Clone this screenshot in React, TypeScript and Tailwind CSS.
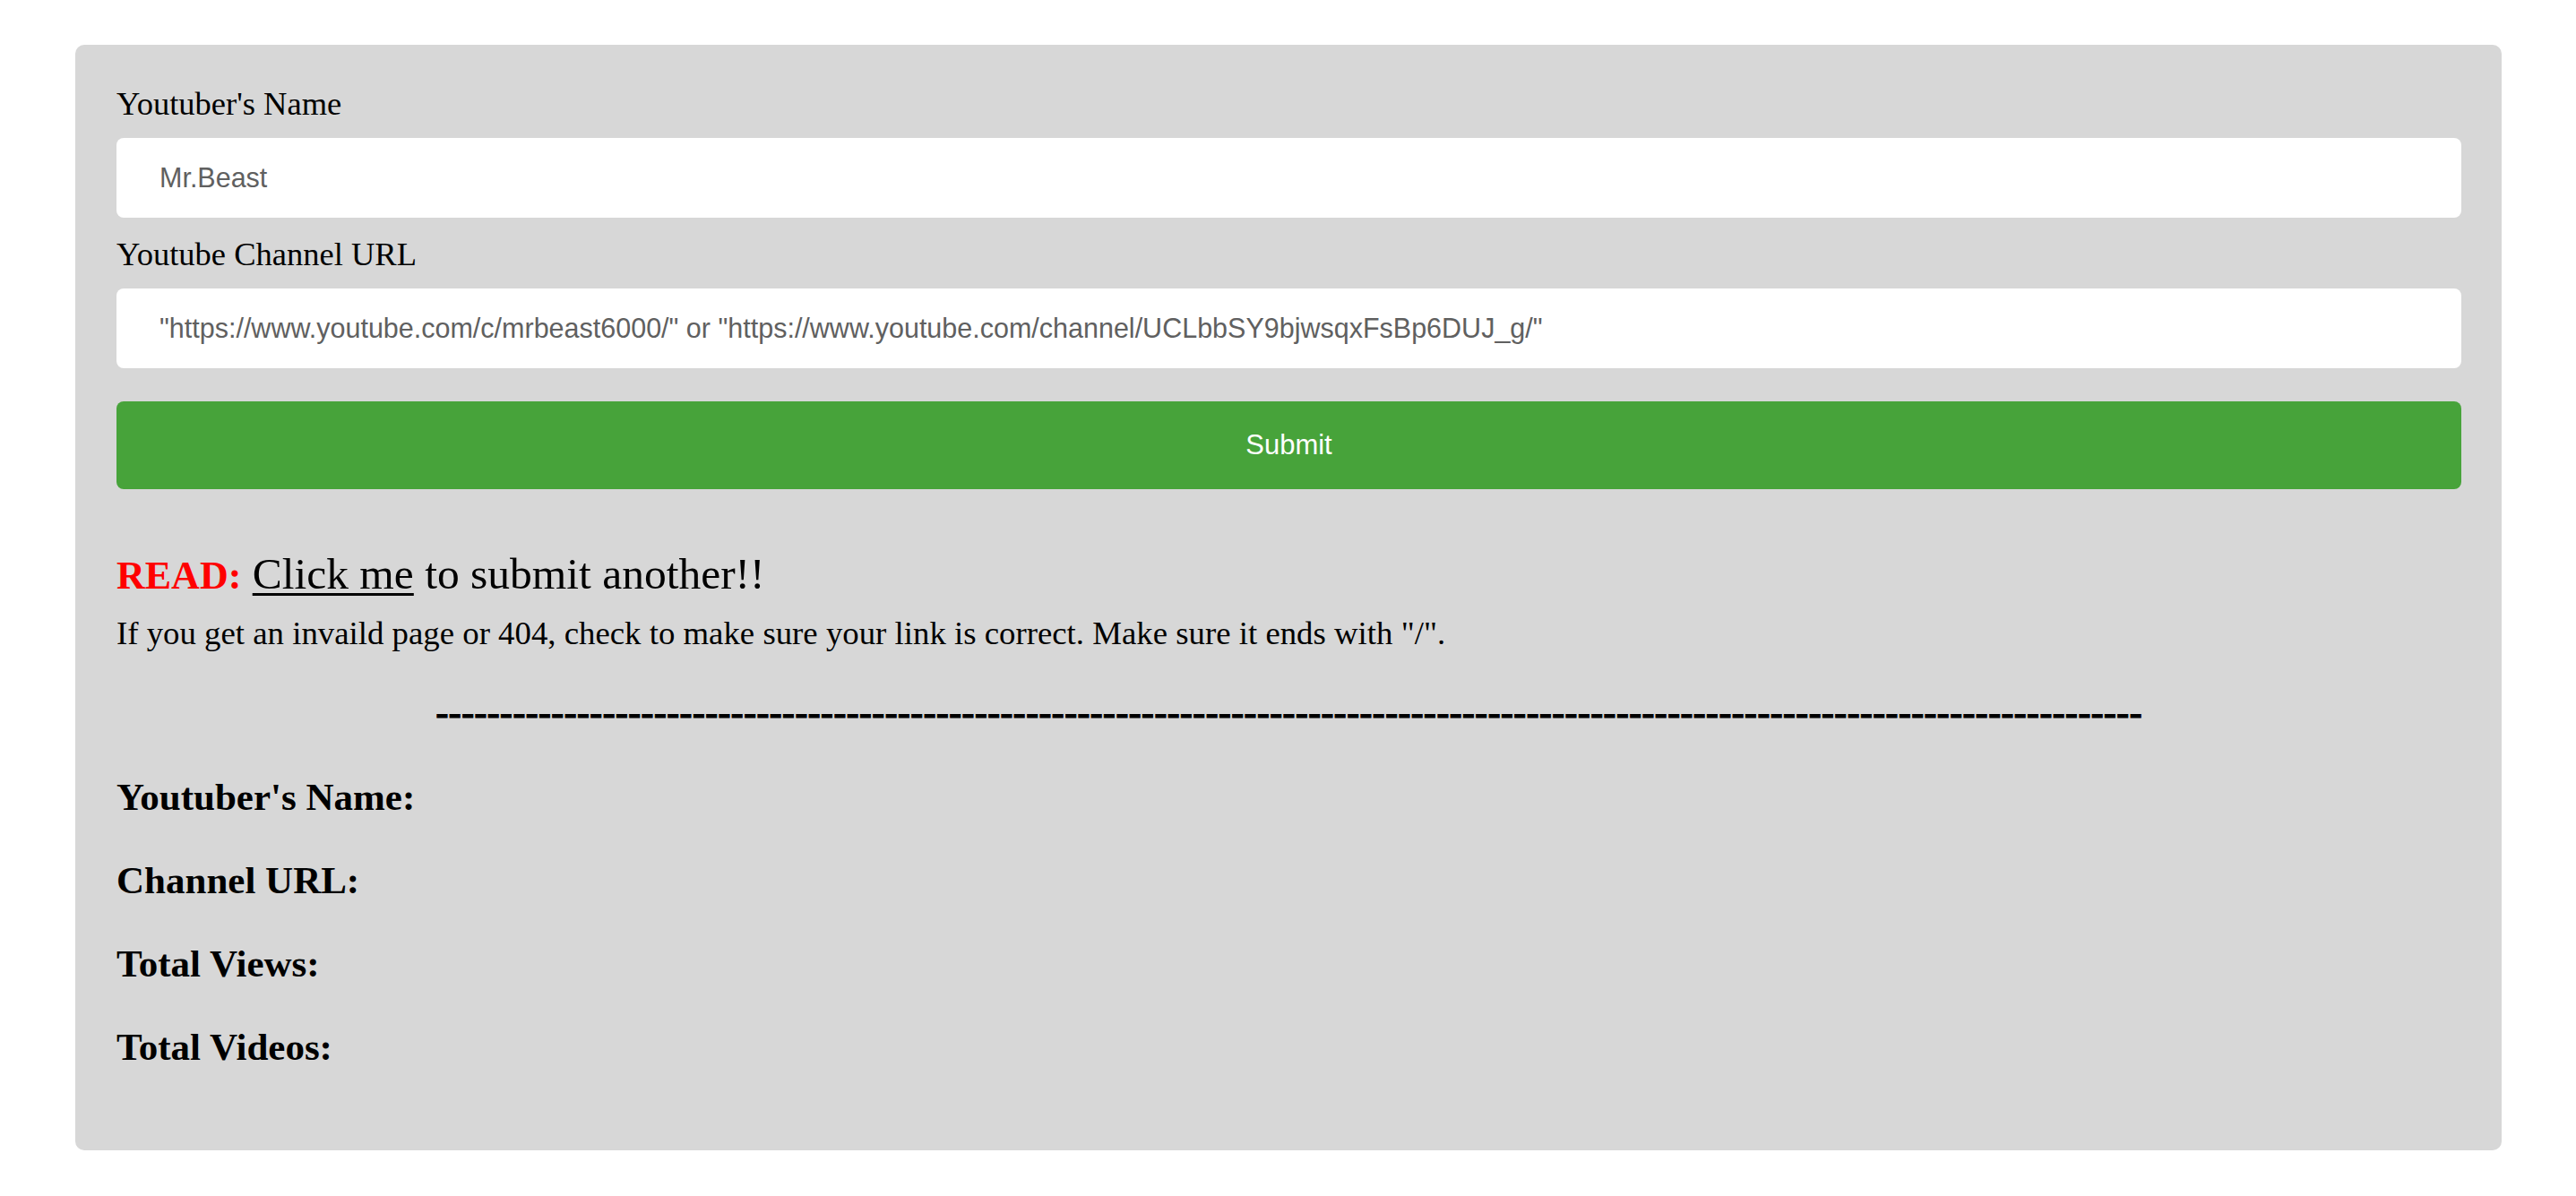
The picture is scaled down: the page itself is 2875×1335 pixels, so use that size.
const DASHES = "-".repeat(133);

function Field({ label, placeholder, first }: { label: string; placeholder: string; first?: boolean }) {
  return (
    <div className={first ? "" : "mt-[21px]"}>
      <label className="block text-[36.5px] leading-[40px] text-black">{label}</label>
      <input
        type="text"
        placeholder={placeholder}
        className="mt-[18px] block h-[89px] w-full rounded-[8px] bg-white pl-[48px] pr-[40px] font-['Liberation_Sans',Arial,sans-serif] text-[30.5px] text-[#333] outline-none placeholder:text-[#606060]"
      />
    </div>
  );
}

export default function App() {
  return (
    <main className="min-h-screen bg-white pl-[84px] pr-[83px] pt-[50px] pb-[51px] font-['Liberation_Serif','Times_New_Roman',serif]">
      <section className="rounded-[10px] bg-[#d7d7d7] pl-[46px] pr-[45px] pt-[46px] pb-[91px]">
        <form onSubmit={(e) => e.preventDefault()}>
          <Field first label="Youtuber's Name" placeholder="Mr.Beast" />
          <Field
            label="Youtube Channel URL"
            placeholder={'"https://www.youtube.com/c/mrbeast6000/" or "https://www.youtube.com/channel/UCLbbSY9bjwsqxFsBp6DUJ_g/"'}
          />
          <button
            type="submit"
            className="mt-[37px] block h-[98px] w-full rounded-[8px] bg-[#47a33a] font-['Liberation_Sans',Arial,sans-serif] text-[31px] text-white"
          >
            Submit
          </button>
        </form>

        <p className="mt-[70px] text-[49.5px] leading-[49px] text-black">
          <span className="text-[44px] font-bold text-[#ff0000]">READ:</span>{" "}
          <a href="#" className="text-black underline decoration-[3px] underline-offset-[5px]">
            Click me
          </a>{" "}
          to submit another!!
        </p>
        <p className="mt-[20px] text-[36.8px] leading-[40px] text-black">
          If you get an invaild page or 404, check to make sure your link is correct. Make sure it ends with "/".
        </p>

        <p className="mt-[44px] text-center text-[43px] font-bold leading-[48px] text-black [-webkit-text-stroke:1px_black]">
          {DASHES}
        </p>

        <div className="mt-[46px] flex flex-col gap-[44px] text-[43px] font-bold leading-[49px] text-black">
          <h3>Youtuber's Name:</h3>
          <h3>Channel URL:</h3>
          <h3>Total Views:</h3>
          <h3>Total Videos:</h3>
        </div>
      </section>
    </main>
  );
}
